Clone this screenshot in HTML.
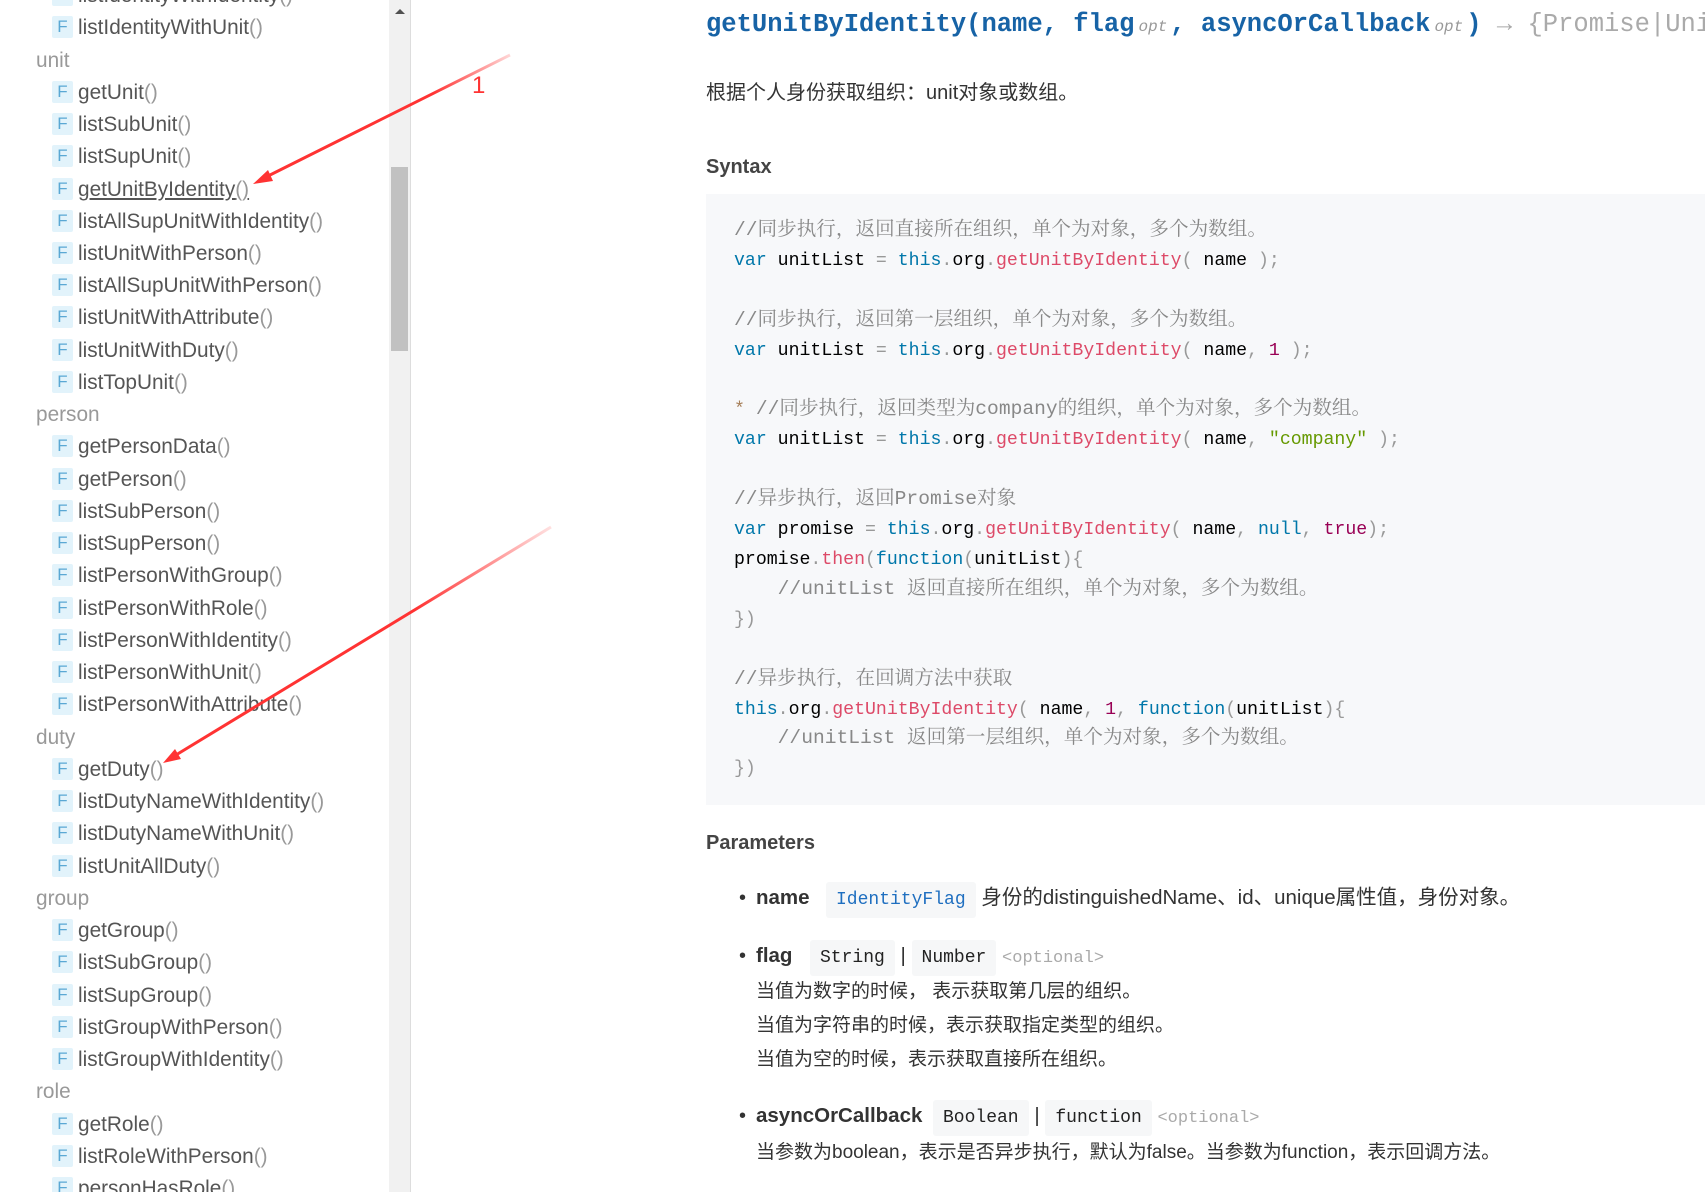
<!DOCTYPE html>
<html><head><meta charset="utf-8">
<style>
html,body{margin:0;padding:0;width:1705px;height:1192px;overflow:hidden;background:#fff;position:relative;font-family:"Liberation Sans","Noto Sans CJK SC",sans-serif}
.r{position:absolute;left:0;height:32px;line-height:32px;white-space:nowrap;font-size:20.8px;color:#555;margin-top:3px}
.h{left:36px;color:#999}
.it{left:52px}
.it b{display:inline-block;width:21px;height:22px;line-height:22px;text-align:center;background:#e2f3fb;color:#5aa8d4;font-weight:normal;font-size:17px;border-radius:2px;margin-right:5px;vertical-align:middle;position:relative;top:-2px}
.it i{font-style:normal;color:#999}
.u{text-decoration:underline}
#sb{position:absolute;left:389px;top:0;width:21px;height:1192px;background:#f1f1f1;border-right:1px solid #ddd}
#th{position:absolute;left:391px;top:167px;width:17px;height:184px;background:#c1c1c1}
.main{position:absolute;left:706px}
.title{top:7px;font-family:"Liberation Mono",monospace;font-weight:bold;font-size:25.5px;color:#1763a6;white-space:nowrap;line-height:36px}
.title small{font-weight:normal;font-style:italic;font-size:16px;color:#999;margin:0 3px 0 4px}
.title .ret{font-weight:normal;color:#aaa}
.desc{top:78px;font-size:20px;color:#333;line-height:30px}
.h4{font-size:20px;font-weight:bold;color:#444}
.code{position:absolute;left:706px;top:194px;width:999px;height:611px;background:#f7f8fa}
.code pre{margin:0;position:absolute;left:28px;top:23px;font-family:"Liberation Mono","Noto Sans CJK SC",monospace;font-size:18.2px;line-height:29.9px;color:#000}
.c{color:#888;font-family:"Liberation Mono","Noto Serif CJK SC",monospace;font-size:19.6px;line-height:0}
.k{color:#07a}.f{color:#dd4a68}.p{color:#999}.n{color:#905}.s{color:#690}
.pl{position:absolute;left:739px;font-size:20.5px;color:#333;white-space:nowrap}
.pl .dot{position:absolute;left:0;top:0;font-size:20px}
.pl .nm{position:absolute;left:17px;font-weight:bold;color:#333}
.tag{display:inline-block;background:#f6f7f8;font-family:"Liberation Mono",monospace;font-size:18px;padding:0 10px;line-height:36px;border-radius:3px;color:#222}
.opt{font-family:"Liberation Mono",monospace;color:#aaa;font-size:17px}
.tx{position:absolute;left:756px;font-size:19px;color:#333;white-space:nowrap}
</style></head><body>
<div class="r it" style="top:-23px"><b>F</b>listIdentityWithIdentity<i>()</i></div>
<div class="r it" style="top:9px"><b>F</b>listIdentityWithUnit<i>()</i></div>
<div class="r h" style="top:42px">unit</div>
<div class="r it" style="top:74px"><b>F</b>getUnit<i>()</i></div>
<div class="r it" style="top:106px"><b>F</b>listSubUnit<i>()</i></div>
<div class="r it" style="top:138px"><b>F</b>listSupUnit<i>()</i></div>
<div class="r it" style="top:171px"><b>F</b><span class="u">getUnitByIdentity<i>()</i></span></div>
<div class="r it" style="top:203px"><b>F</b>listAllSupUnitWithIdentity<i>()</i></div>
<div class="r it" style="top:235px"><b>F</b>listUnitWithPerson<i>()</i></div>
<div class="r it" style="top:267px"><b>F</b>listAllSupUnitWithPerson<i>()</i></div>
<div class="r it" style="top:299px"><b>F</b>listUnitWithAttribute<i>()</i></div>
<div class="r it" style="top:332px"><b>F</b>listUnitWithDuty<i>()</i></div>
<div class="r it" style="top:364px"><b>F</b>listTopUnit<i>()</i></div>
<div class="r h" style="top:396px">person</div>
<div class="r it" style="top:428px"><b>F</b>getPersonData<i>()</i></div>
<div class="r it" style="top:461px"><b>F</b>getPerson<i>()</i></div>
<div class="r it" style="top:493px"><b>F</b>listSubPerson<i>()</i></div>
<div class="r it" style="top:525px"><b>F</b>listSupPerson<i>()</i></div>
<div class="r it" style="top:557px"><b>F</b>listPersonWithGroup<i>()</i></div>
<div class="r it" style="top:590px"><b>F</b>listPersonWithRole<i>()</i></div>
<div class="r it" style="top:622px"><b>F</b>listPersonWithIdentity<i>()</i></div>
<div class="r it" style="top:654px"><b>F</b>listPersonWithUnit<i>()</i></div>
<div class="r it" style="top:686px"><b>F</b>listPersonWithAttribute<i>()</i></div>
<div class="r h" style="top:719px">duty</div>
<div class="r it" style="top:751px"><b>F</b>getDuty<i>()</i></div>
<div class="r it" style="top:783px"><b>F</b>listDutyNameWithIdentity<i>()</i></div>
<div class="r it" style="top:815px"><b>F</b>listDutyNameWithUnit<i>()</i></div>
<div class="r it" style="top:848px"><b>F</b>listUnitAllDuty<i>()</i></div>
<div class="r h" style="top:880px">group</div>
<div class="r it" style="top:912px"><b>F</b>getGroup<i>()</i></div>
<div class="r it" style="top:944px"><b>F</b>listSubGroup<i>()</i></div>
<div class="r it" style="top:977px"><b>F</b>listSupGroup<i>()</i></div>
<div class="r it" style="top:1009px"><b>F</b>listGroupWithPerson<i>()</i></div>
<div class="r it" style="top:1041px"><b>F</b>listGroupWithIdentity<i>()</i></div>
<div class="r h" style="top:1073px">role</div>
<div class="r it" style="top:1106px"><b>F</b>getRole<i>()</i></div>
<div class="r it" style="top:1138px"><b>F</b>listRoleWithPerson<i>()</i></div>
<div class="r it" style="top:1170px"><b>F</b>personHasRole<i>()</i></div>

<div id="sb"></div><div id="th"></div>
<svg style="position:absolute;left:394px;top:8px" width="12" height="8"><path d="M1 6L6 1L11 6Z" fill="#505050"/></svg>

<div class="main title">getUnitByIdentity(name, flag<small>opt</small>, asyncOrCallback<small>opt</small>) <span class="ret">→ {Promise|Unit}</span></div>
<div class="main desc">根据个人身份获取组织：unit对象或数组。</div>
<div class="main h4" style="top:156px">Syntax</div>
<div class="code"><pre><span class="c">//同步执行，返回直接所在组织，单个为对象，多个为数组。</span>
<span class="k">var</span> unitList <span class="p">=</span> <span class="k">this</span><span class="p">.</span>org<span class="p">.</span><span class="f">getUnitByIdentity</span><span class="p">(</span> name <span class="p">);</span>

<span class="c">//同步执行，返回第一层组织，单个为对象，多个为数组。</span>
<span class="k">var</span> unitList <span class="p">=</span> <span class="k">this</span><span class="p">.</span>org<span class="p">.</span><span class="f">getUnitByIdentity</span><span class="p">(</span> name<span class="p">,</span> <span class="n">1</span> <span class="p">);</span>

<span style="color:#a67f59">*</span> <span class="c">//同步执行，返回类型为company的组织，单个为对象，多个为数组。</span>
<span class="k">var</span> unitList <span class="p">=</span> <span class="k">this</span><span class="p">.</span>org<span class="p">.</span><span class="f">getUnitByIdentity</span><span class="p">(</span> name<span class="p">,</span> <span class="s">"company"</span> <span class="p">);</span>

<span class="c">//异步执行，返回Promise对象</span>
<span class="k">var</span> promise <span class="p">=</span> <span class="k">this</span><span class="p">.</span>org<span class="p">.</span><span class="f">getUnitByIdentity</span><span class="p">(</span> name<span class="p">,</span> <span class="k">null</span><span class="p">,</span> <span class="n">true</span><span class="p">);</span>
promise<span class="p">.</span><span class="f">then</span><span class="p">(</span><span class="k">function</span><span class="p">(</span>unitList<span class="p">){</span>
    <span class="c">//unitList 返回直接所在组织，单个为对象，多个为数组。</span>
<span class="p">})</span>

<span class="c">//异步执行，在回调方法中获取</span>
<span class="k">this</span><span class="p">.</span>org<span class="p">.</span><span class="f">getUnitByIdentity</span><span class="p">(</span> name<span class="p">,</span> <span class="n">1</span><span class="p">,</span> <span class="k">function</span><span class="p">(</span>unitList<span class="p">){</span>
    <span class="c">//unitList 返回第一层组织，单个为对象，多个为数组。</span>
<span class="p">})</span></pre></div>
<div class="main h4" style="top:832px">Parameters</div>

<div class="pl" style="top:880px;height:36px;line-height:36px"><span class="dot">•</span><span class="nm">name</span><span style="position:absolute;left:87px"><span class="tag" style="color:#1f6fc0">IdentityFlag</span> 身份的distinguishedName、id、unique属性值，身份对象。</span></div>
<div class="pl" style="top:938px;height:36px;line-height:36px"><span class="dot">•</span><span class="nm">flag</span><span style="position:absolute;left:71px"><span class="tag">String</span> | <span class="tag">Number</span> <span class="opt">&lt;optional&gt;</span></span></div>
<div class="tx" style="top:976px">当值为数字的时候， 表示获取第几层的组织。</div>
<div class="tx" style="top:1010px">当值为字符串的时候，表示获取指定类型的组织。</div>
<div class="tx" style="top:1044px">当值为空的时候，表示获取直接所在组织。</div>
<div class="pl" style="top:1098px;height:36px;line-height:36px"><span class="dot">•</span><span class="nm">asyncOrCallback</span><span style="position:absolute;left:194px"><span class="tag">Boolean</span> | <span class="tag">function</span> <span class="opt">&lt;optional&gt;</span></span></div>
<div class="tx" style="top:1137px">当参数为boolean，表示是否异步执行，默认为false。当参数为function，表示回调方法。</div>

<svg style="position:absolute;left:0;top:0" width="1705" height="1192">
<defs><linearGradient id="g1" x1="510" y1="55" x2="253" y2="184" gradientUnits="userSpaceOnUse"><stop offset="0" stop-color="#f33" stop-opacity="0.2"/><stop offset="0.3" stop-color="#f33"/></linearGradient>
<linearGradient id="g2" x1="551" y1="527" x2="163" y2="763" gradientUnits="userSpaceOnUse"><stop offset="0" stop-color="#f33" stop-opacity="0.15"/><stop offset="0.35" stop-color="#f33"/></linearGradient></defs>
<line x1="510" y1="55" x2="262" y2="179" stroke="url(#g1)" stroke-width="3"/>
<path d="M253 184L268 170L273 181Z" fill="#f33"/>
<text x="472" y="93" fill="#f33" font-family="Liberation Sans" font-size="24">1</text>
<line x1="551" y1="527" x2="171" y2="758" stroke="url(#g2)" stroke-width="3"/>
<path d="M163 763L175 749L181 759Z" fill="#f33"/>
</svg>
</body></html>
